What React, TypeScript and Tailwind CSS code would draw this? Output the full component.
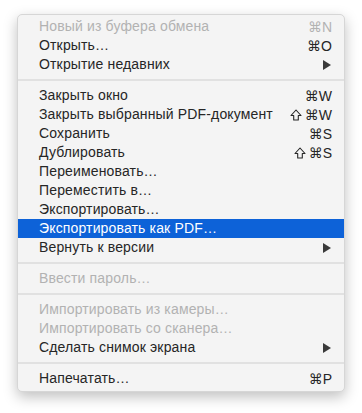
type Item =
  | { kind: 'sep' }
  | { kind: 'item'; label: string; shift?: boolean; keyChar?: string; disabled?: boolean; submenu?: boolean; active?: boolean }

const items: Item[] = [
  { kind: 'item', label: 'Новый из буфера обмена', keyChar: 'N', disabled: true },
  { kind: 'item', label: 'Открыть…', keyChar: 'O' },
  { kind: 'item', label: 'Открытие недавних', submenu: true },
  { kind: 'sep' },
  { kind: 'item', label: 'Закрыть окно', keyChar: 'W' },
  { kind: 'item', label: 'Закрыть выбранный PDF-документ', shift: true, keyChar: 'W' },
  { kind: 'item', label: 'Сохранить', keyChar: 'S' },
  { kind: 'item', label: 'Дублировать', shift: true, keyChar: 'S' },
  { kind: 'item', label: 'Переименовать…' },
  { kind: 'item', label: 'Переместить в…' },
  { kind: 'item', label: 'Экспортировать…' },
  { kind: 'item', label: 'Экспортировать как PDF…', active: true },
  { kind: 'item', label: 'Вернуть к версии', submenu: true },
  { kind: 'sep' },
  { kind: 'item', label: 'Ввести пароль…', disabled: true },
  { kind: 'sep' },
  { kind: 'item', label: 'Импортировать из камеры…', disabled: true },
  { kind: 'item', label: 'Импортировать со сканера…', disabled: true },
  { kind: 'item', label: 'Сделать снимок экрана', submenu: true },
  { kind: 'sep' },
  { kind: 'item', label: 'Напечатать…', keyChar: 'P' },
]

function Arrow({ color }: { color: string }) {
  return (
    <svg width="8" height="10" viewBox="0 0 8 10">
      <path d="M0 0 L8 5 L0 10 Z" fill={color} />
    </svg>
  )
}

function ShiftIcon({ color }: { color: string }) {
  return (
    <svg width="12" height="12" viewBox="0 0 12 12" className="mr-[3px]">
      <path d="M6 1 L11 6.5 H8.3 V11 H3.7 V6.5 H1 Z" fill="none" stroke={color} strokeWidth="1.1" strokeLinejoin="round" />
    </svg>
  )
}

export default function App() {
  return (
    <div className="w-[362px] h-[413px] bg-white pt-[14px] pl-[17px]" style={{ fontFamily: '"Liberation Sans", Arial, sans-serif' }}>
      <div className="w-[328px] rounded-[5px] bg-[#f4f4f4] border border-[#d6d6d6] pt-[2px] pb-[3px] shadow-[0_5px_14px_rgba(0,0,0,0.25)]">
        {items.map((it, i) => {
          if (it.kind === 'sep') {
            return (
              <div key={i} className="h-[12px] flex items-center">
                <div className="h-[2px] w-full bg-[#e1e1e1]" />
              </div>
            )
          }
          const textColor = it.active ? 'text-white' : it.disabled ? 'text-[#b2b2b2]' : 'text-[#262626]'
          const iconColor = it.disabled ? '#b2b2b2' : '#262626'
          return (
            <div
              key={i}
              className={`h-[19px] flex items-center justify-between pl-[21px] pr-[12px] text-[14px] ${textColor} ${it.active ? 'bg-[#0d62d8]' : ''}`}
            >
              <span className="tracking-[0.15px]">{it.label}</span>
              {it.keyChar && (
                <span className="flex items-center">
                  {it.shift && <ShiftIcon color={iconColor} />}
                  <span className="text-[14px] leading-none" style={{ fontFamily: '"DejaVu Sans", sans-serif' }}>⌘</span>
                  <span className="text-[14px] leading-none">{it.keyChar}</span>
                </span>
              )}
              {it.submenu && (
                <span className="pr-[1px]">
                  <Arrow color={it.disabled ? '#b2b2b2' : '#3a3a3a'} />
                </span>
              )}
            </div>
          )
        })}
      </div>
    </div>
  )
}
